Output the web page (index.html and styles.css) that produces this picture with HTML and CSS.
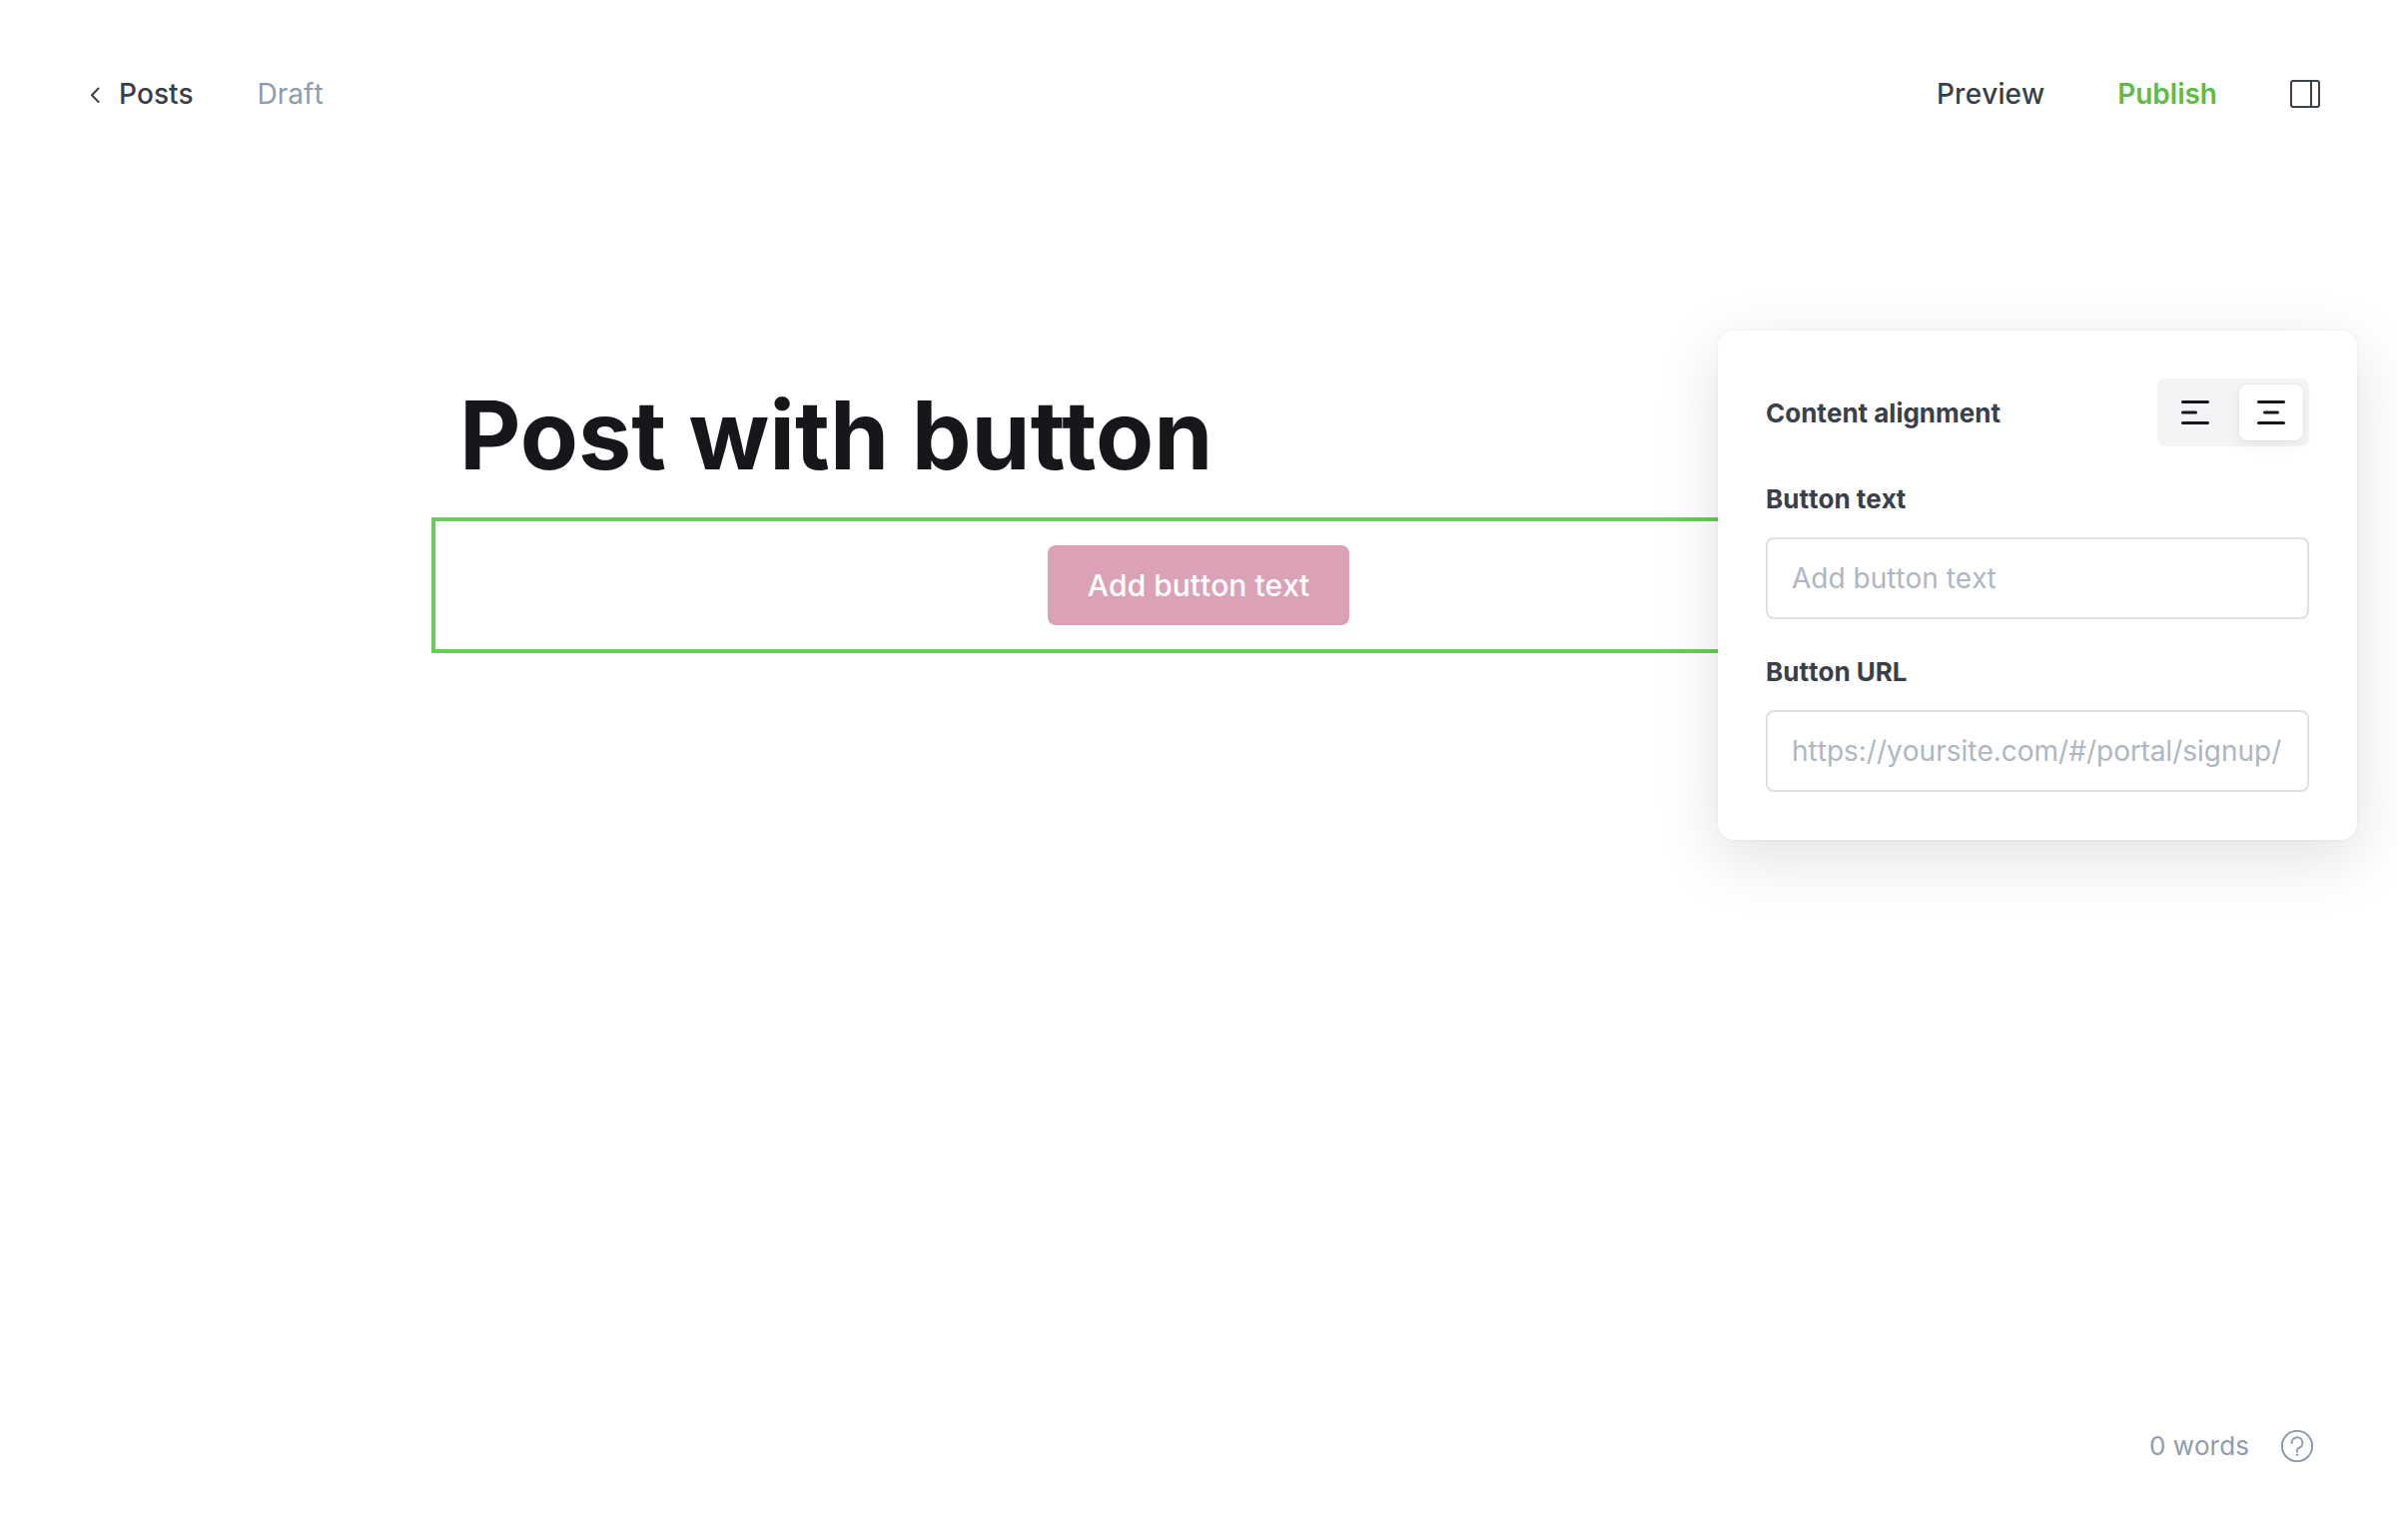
FILE: index.html
```html
<!DOCTYPE html>
<html lang="en">
<head>
<meta charset="utf-8">
<meta name="viewport" content="width=device-width, initial-scale=1">
<title>Post with button</title>
<link rel="stylesheet" href="styles.css">
</head>
<body>
<div class="editor">
  <header class="topbar">
    <div class="topbar-group">
      <a class="back-link" href="#posts">
        <svg class="icon-chevron" width="12" height="18" viewBox="0 0 12 18" aria-hidden="true"><path d="M10.500 3.500 L4 10.300 L10.500 17"/></svg>
        <span>Posts</span>
      </a>
      <span class="status">Draft</span>
    </div>
    <div class="topbar-group topbar-actions">
      <button class="text-button" type="button">Preview</button>
      <button class="text-button text-button-publish" type="button">Publish</button>
      <button class="icon-button" type="button" aria-label="Settings">
        <svg width="30" height="28" viewBox="0 0 30 28" aria-hidden="true"><rect x="1" y="1" width="28" height="26" rx="2"/><path d="M21 1v26"/></svg>
      </button>
    </div>
  </header>

  <main class="canvas">
    <h1 class="post-title">Post with button</h1>
    <section class="button-card">
      <button class="card-button" type="button">Add button text</button>
    </section>

    <form class="settings-panel">
      <div class="setting-row">
        <span class="setting-label" id="alignment-label">Content alignment</span>
        <div class="toggle" role="group" aria-labelledby="alignment-label">
          <button class="toggle-option" type="button" aria-label="Left">
            <svg width="28" height="24" viewBox="0 0 28 24" aria-hidden="true"><path d="M1.500 1.500h25M1.500 12h13M1.500 22.500h25"/></svg>
          </button>
          <button class="toggle-option toggle-option-active" type="button" aria-label="Center" aria-pressed="true">
            <svg width="28" height="24" viewBox="0 0 28 24" aria-hidden="true"><path d="M1.500 1.500h25M7.500 12h13M1.500 22.500h25"/></svg>
          </button>
        </div>
      </div>
      <div class="setting-field">
        <label class="setting-label" for="button-text">Button text</label>
        <input class="setting-input" id="button-text" type="text" placeholder="Add button text">
      </div>
      <div class="setting-field">
        <label class="setting-label" for="button-url">Button URL</label>
        <input class="setting-input" id="button-url" type="text" placeholder="https://yoursite.com/#/portal/signup/">
      </div>
    </form>
  </main>

  <footer class="bottombar">
    <span>0 words</span>
    <a class="help-link" href="#help" aria-label="Help">
      <svg width="32" height="32" viewBox="0 0 32 32" aria-hidden="true"><circle cx="16" cy="16" r="15.200"/><path d="M10.600 13a5.400 5.400 0 1 1 7.600 4.700c-1.500.7-2.200 1.500-2.200 2.900v1"/><circle class="dot" cx="16" cy="24.800" r="1.200"/></svg>
    </a>
  </footer>
</div>
</body>
</html>
```
FILE: styles.css
```css
* {
  box-sizing: border-box;
}

body {
  margin: 0;
  background: #fff;
  color: #394047;
  font-family: Inter, "Liberation Sans", sans-serif;
  font-size: 26px;
  font-kerning: none;
  line-height: 36px;
}

button,
input {
  margin: 0;
  padding: 0;
  border: 0;
  background: none;
  color: inherit;
  font: inherit;
  font-kerning: none;
}

a {
  color: inherit;
  text-decoration: none;
}

svg {
  display: block;
  fill: none;
  stroke: currentColor;
}

.editor {
  display: flex;
  flex-direction: column;
  min-height: 100vh;
}

.topbar {
  display: flex;
  align-items: center;
  justify-content: space-between;
  padding: 76px 77px 0 88px;
  font-size: 28px;
}

.topbar-group {
  display: flex;
  align-items: center;
  gap: 64px;
}

.topbar-actions {
  gap: 73px;
}

.back-link {
  display: flex;
  align-items: center;
  gap: 19px;
  font-weight: 500;
}

.icon-chevron {
  stroke-width: 2;
  stroke-linecap: round;
  stroke-linejoin: round;
}

.status {
  color: #8e9cac;
}

.text-button {
  font-weight: 500;
}

.text-button-publish {
  color: #5dbc48;
  font-weight: 600;
}

.icon-button svg {
  stroke-width: 2;
}

.canvas {
  position: relative;
  flex: 1;
  padding-top: 264px;
}

.post-title {
  max-width: 1480px;
  margin: 0 auto 22px;
  color: #15171a;
  font-size: 95px;
  font-kerning: normal;
  font-weight: 700;
  line-height: 120px;
}

.button-card {
  display: flex;
  justify-content: center;
  max-width: 1536px;
  margin: 0 auto;
  padding: 24px;
  border: 4px solid #68cc58;
}

.card-button {
  height: 80px;
  padding: 0 40px;
  border-radius: 8px;
  background: #dba2b7;
  color: #fff;
  font-size: 30px;
  font-weight: 500;
}

.settings-panel {
  position: absolute;
  top: 219px;
  right: 40px;
  width: 640px;
  padding: 48px;
  border-radius: 16px;
  background: #fff;
  box-shadow: 0 0 4px rgba(0, 0, 0, 0.05), 0 18px 64px rgba(0, 0, 0, 0.12);
}

.setting-row {
  display: flex;
  align-items: center;
  justify-content: space-between;
}

.setting-field {
  display: flex;
  flex-direction: column;
  gap: 20px;
  padding-top: 34px;
}

.setting-label {
  font-size: 26px;
  font-weight: 700;
  line-height: 37px;
}

.toggle {
  display: flex;
  gap: 12px;
  padding: 6px;
  border-radius: 8px;
  background: #f3f4f6;
}

.toggle-option {
  display: flex;
  align-items: center;
  justify-content: center;
  width: 64px;
  height: 56px;
  border-radius: 8px;
  color: #15171a;
}

.toggle-option svg {
  stroke-width: 3;
  stroke-linecap: round;
}

.toggle-option-active {
  background: #fff;
  box-shadow: 0 0 2px rgba(0, 0, 0, 0.12), 0 6px 14px rgba(0, 0, 0, 0.05);
}

.setting-input {
  width: 100%;
  height: 82px;
  padding: 0 24px;
  border: 2px solid #dde1e6;
  border-radius: 8px;
  font-size: 28px;
}

.setting-input::placeholder {
  color: #aeb7c1;
  opacity: 1;
}

.bottombar {
  display: flex;
  align-items: center;
  justify-content: flex-end;
  gap: 32px;
  padding: 0 84px 76px;
  color: #8e9cac;
}

.help-link svg {
  stroke-width: 2;
  stroke-linecap: round;
}

.dot {
  fill: currentColor;
  stroke: none;
}
```
